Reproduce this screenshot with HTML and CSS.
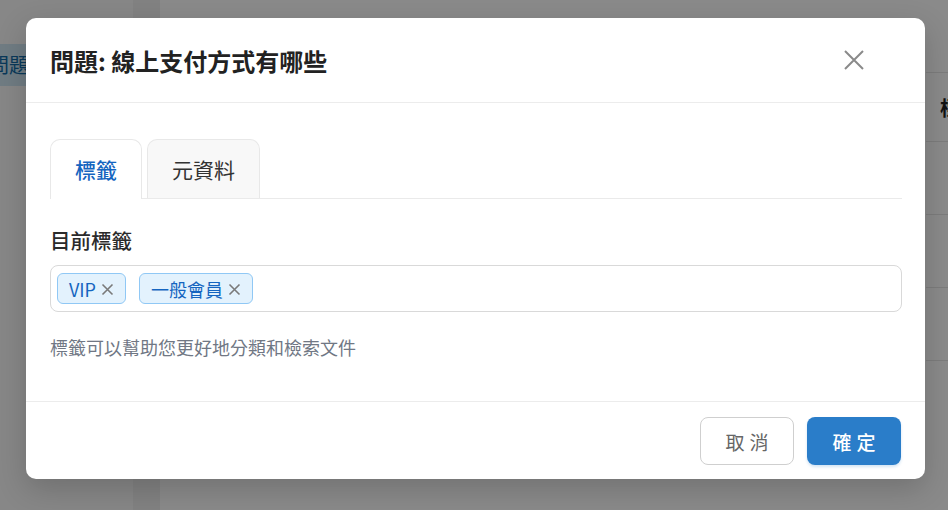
FILE: index.html
```html
<!DOCTYPE html>
<html lang="zh-Hant">
<head>
<meta charset="utf-8">
<title>問題</title>
<link rel="stylesheet" href="styles.css">
</head>
<body>
<div class="page">
  <aside class="side">
    <div class="side-item">問題</div>
  </aside>
  <div class="strip"></div>
  <main class="main">
    <div class="col">
      <div class="col-head">標</div>
      <div class="col-row"></div>
      <div class="col-row"></div>
      <div class="col-row"></div>
    </div>
  </main>
</div>
<div class="overlay"></div>
<div class="modal">
  <header class="modal-header">
    <h2 class="modal-title">問題: 線上支付方式有哪些</h2>
    <button class="close" aria-label="關閉">
      <svg width="22" height="22" viewBox="0 0 22 22"><path d="M2 2 L20 20 M20 2 L2 20" stroke="#8a8a8a" stroke-width="2" fill="none"/></svg>
    </button>
  </header>
  <section class="modal-body">
    <div class="tabs">
      <div class="tab active">標籤</div>
      <div class="tab">元資料</div>
    </div>
    <div class="label">目前標籤</div>
    <div class="tag-input">
      <span class="chip">VIP<svg class="x" width="13" height="13" viewBox="0 0 13 13"><path d="M1.5 1.5 L11.5 11.5 M11.5 1.5 L1.5 11.5" stroke="#7a7a7a" stroke-width="1.6" fill="none"/></svg></span>
      <span class="chip">一般會員<svg class="x" width="13" height="13" viewBox="0 0 13 13"><path d="M1.5 1.5 L11.5 11.5 M11.5 1.5 L1.5 11.5" stroke="#7a7a7a" stroke-width="1.6" fill="none"/></svg></span>
    </div>
    <p class="help">標籤可以幫助您更好地分類和檢索文件</p>
  </section>
  <footer class="modal-footer">
    <button class="btn btn-cancel">取消</button>
    <button class="btn btn-ok">確定</button>
  </footer>
</div>
</body>
</html>
```
FILE: styles.css
```css
* { box-sizing: border-box; }
html, body { margin: 0; padding: 0; }
body {
  width: 948px;
  height: 510px;
  overflow: hidden;
  font-family: "Noto Sans CJK TC", "Noto Sans", sans-serif;
  background: #fff;
  position: relative;
}
.page {
  display: flex;
  height: 510px;
}
.side {
  width: 133px;
  background: #fafafa;
  padding-top: 44px;
  overflow: hidden;
}
.side-item {
  height: 42px;
  background: #cfe6f2;
  color: #126aa6;
  font-size: 20px;
  line-height: 42px;
  margin-left: -11px;
  width: 60px;
  white-space: nowrap;
}
.strip { width: 27px; background: #f1f1f1; }
.main { flex: 1; display: flex; justify-content: flex-end; }
.col { width: 22px; padding-top: 72px; }
.col-head {
  height: 70px;
  border-top: 1px solid #e5e5e5;
  border-bottom: 1px solid #e5e5e5;
  font-weight: 700;
  font-size: 20px;
  line-height: 70px;
  color: #222;
  padding-left: 14px;
  overflow: hidden;
  white-space: nowrap;
}
.col-row { height: 73px; border-bottom: 1px solid #e5e5e5; }
.overlay {
  position: absolute;
  inset: 0;
  background: rgba(0, 0, 0, 0.46);
}
.modal {
  position: absolute;
  left: 26px;
  top: 18px;
  width: 899px;
  height: 461px;
  background: #fff;
  border-radius: 10px;
  box-shadow: 0 10px 30px rgba(0, 0, 0, 0.18);
  display: flex;
  flex-direction: column;
}
.modal-header {
  height: 85px;
  border-bottom: 1px solid #ececec;
  display: flex;
  align-items: center;
  justify-content: space-between;
  padding: 0 59px 0 24px;
}
.modal-title {
  margin: 0;
  font-size: 24px;
  font-weight: 700;
  color: #222;
}
.close {
  border: 0;
  background: none;
  padding: 0;
  width: 24px;
  height: 24px;
  display: flex;
  align-items: center;
  justify-content: center;
  cursor: pointer;
}
.modal-body {
  flex: 1;
  padding: 36px 23px 0 24px;
  border-bottom: 1px solid #ececec;
}
.tabs {
  display: flex;
  gap: 5px;
  border-bottom: 1px solid #eaeaea;
}
.tab {
  height: 59px;
  padding: 0 24px;
  font-size: 21px;
  line-height: 59px;
  color: #333;
  background: #f8f8f8;
  border: 1px solid #e8e8e8;
  border-bottom: 0;
  border-radius: 10px 10px 0 0;
}
.tab.active {
  background: #fff;
  color: #1565c0;
  font-weight: 500;
  margin-bottom: -1px;
  height: 60px;
}
.label {
  margin-top: 27px;
  font-size: 20.5px;
  font-weight: 500;
  line-height: 28px;
  color: #2b2b2b;
}
.tag-input {
  margin-top: 11px;
  height: 47px;
  border: 1px solid #d9d9d9;
  border-radius: 8px;
  padding: 0 6px;
  display: flex;
  align-items: center;
  gap: 13px;
}
.chip {
  height: 31px;
  padding: 0 11px;
  display: inline-flex;
  align-items: center;
  background: #e3f2fd;
  border: 1px solid #90c8f5;
  border-radius: 6px;
  color: #1565c0;
  font-size: 18px;
  white-space: nowrap;
}
.chip .x {
  margin-left: 5px;
  margin-top: 1px;
}
.help {
  margin: 22px 0 0;
  font-size: 18px;
  line-height: 26px;
  color: #707784;
}
.modal-footer {
  height: 77px;
  display: flex;
  justify-content: flex-end;
  align-items: flex-start;
  gap: 13px;
  padding: 15px 24px 0 0;
}
.btn {
  width: 94px;
  height: 48px;
  border-radius: 8px;
  font-family: "Noto Sans CJK TC", "Noto Sans", sans-serif;
  font-size: 19px;
  letter-spacing: 5px;
  padding: 0 0 0 5px;
  cursor: pointer;
}
.btn-cancel {
  background: #fff;
  border: 1px solid #cfcfcf;
  color: #666;
}
.btn-ok {
  background: #2a7dc9;
  border: 0;
  color: #fff;
  font-weight: 500;
  box-shadow: 0 2px 3px rgba(42, 125, 201, 0.2);
}
```
